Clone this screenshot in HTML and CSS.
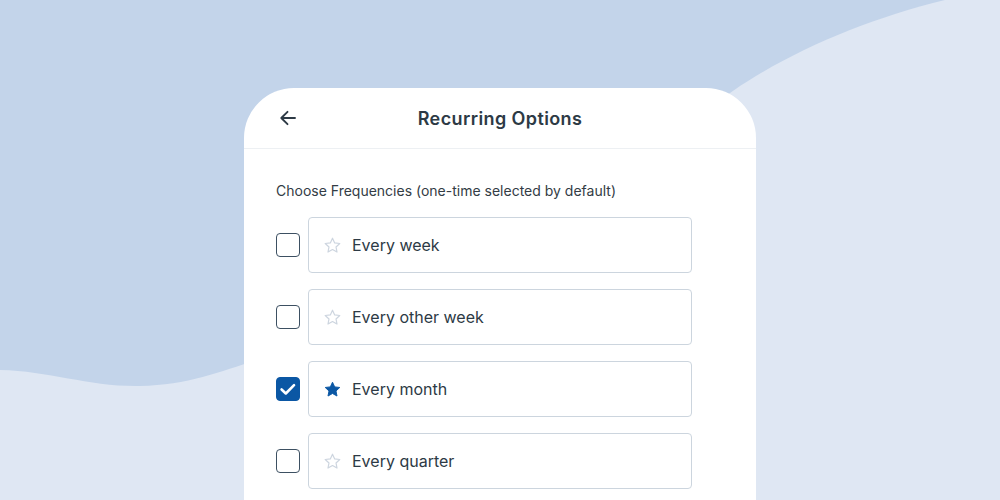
FILE: index.html
```html
<!DOCTYPE html>
<html>
<head>
<meta charset="utf-8">
<link rel="stylesheet" href="styles.css">
</head>
<body>
<svg class="bg" width="1000" height="500" viewBox="0 0 1000 500">
  <rect width="1000" height="500" fill="#c3d4ea"/>
  <path d="M945,0 C855,22 765,62 705,112 L600,500 L1000,500 L1000,0 Z" fill="#dfe7f3"/>
  <path d="M0,370 C50,371 90,387 140,386 C190,385 225,370 262,358 L262,500 L0,500 Z" fill="#dfe7f3"/>
</svg>
<div class="stage">
  <div class="card">
    <div class="header">
      <svg class="back" width="20" height="20" viewBox="0 0 20 20"><path d="M17 10H3.5M9.5 3.8L3.3 10L9.5 16.2" fill="none" stroke="#2d3a45" stroke-width="1.9" stroke-linecap="round" stroke-linejoin="round"/></svg>
      <h1 class="title">Recurring Options</h1>
    </div>
    <div class="content">
      <p class="label">Choose Frequencies (one-time selected by default)</p>
      <div class="row">
        <span class="check"></span>
        <div class="option">
          <svg class="star" width="19" height="19" viewBox="0 0 24 24"><path d="M12 2.8l2.75 5.9 6.45.75-4.77 4.42 1.27 6.38L12 17.05l-5.7 3.2 1.27-6.38L2.8 9.45l6.45-.75z" fill="none" stroke="#cdd5df" stroke-width="1.5" stroke-linejoin="round"/></svg>
          <span class="text">Every week</span>
        </div>
      </div>
      <div class="row">
        <span class="check"></span>
        <div class="option">
          <svg class="star" width="19" height="19" viewBox="0 0 24 24"><path d="M12 2.8l2.75 5.9 6.45.75-4.77 4.42 1.27 6.38L12 17.05l-5.7 3.2 1.27-6.38L2.8 9.45l6.45-.75z" fill="none" stroke="#cdd5df" stroke-width="1.5" stroke-linejoin="round"/></svg>
          <span class="text">Every other week</span>
        </div>
      </div>
      <div class="row">
        <span class="check checked"><svg viewBox="0 0 24 24"><path d="M5 12.5l4.6 4.4 9-9.2" fill="none" stroke="#fff" stroke-width="2.8" stroke-linecap="round" stroke-linejoin="round"/></svg></span>
        <div class="option">
          <svg class="star" width="19" height="19" viewBox="0 0 24 24"><path d="M12 2.8l2.75 5.9 6.45.75-4.77 4.42 1.27 6.38L12 17.05l-5.7 3.2 1.27-6.38L2.8 9.45l6.45-.75z" fill="#0b57a4" stroke="#0b57a4" stroke-width="1.2" stroke-linejoin="round"/></svg>
          <span class="text">Every month</span>
        </div>
      </div>
      <div class="row">
        <span class="check"></span>
        <div class="option">
          <svg class="star" width="19" height="19" viewBox="0 0 24 24"><path d="M12 2.8l2.75 5.9 6.45.75-4.77 4.42 1.27 6.38L12 17.05l-5.7 3.2 1.27-6.38L2.8 9.45l6.45-.75z" fill="none" stroke="#cdd5df" stroke-width="1.5" stroke-linejoin="round"/></svg>
          <span class="text">Every quarter</span>
        </div>
      </div>
    </div>
  </div>
</div>
</body>
</html>
```
FILE: styles.css
```css
html, body {
  margin: 0;
  padding: 0;
  width: 1000px;
  height: 500px;
  overflow: hidden;
  font-family: Inter, "Noto Sans", sans-serif;
  color: #2d3a45;
}
.bg {
  position: absolute;
  left: 0;
  top: 0;
  z-index: 0;
}
.stage {
  position: relative;
  z-index: 1;
  display: flex;
  justify-content: center;
  padding-top: 88px;
}
.card {
  width: 512px;
  height: 412px;
  overflow: hidden;
  background: #fff;
  border-radius: 50px 50px 0 0;
}
.header {
  height: 60px;
  border-bottom: 1px solid #edf0f3;
  display: flex;
  align-items: center;
  justify-content: center;
  position: relative;
}
.back {
  position: absolute;
  left: 34px;
  top: 20px;
}
.title {
  margin: 0;
  font-size: 18px;
  font-weight: 600;
  color: #2d3a45;
  letter-spacing: 0.4px;
}
.content {
  padding: 33px 64px 0 32px;
}
.label {
  margin: 0 0 17px;
  font-size: 14px;
  line-height: 18px;
  color: #333c45;
}
.row {
  display: flex;
  align-items: center;
  gap: 8px;
  margin-bottom: 16px;
}
.check {
  width: 24px;
  height: 24px;
  box-sizing: border-box;
  border: 1.5px solid #3d5062;
  border-radius: 4px;
  flex: none;
}
.check.checked {
  background: #0b57a4;
  border-color: #0b57a4;
  display: flex;
  align-items: center;
  justify-content: center;
}
.check.checked svg {
  width: 22px;
  height: 22px;
}
.option {
  flex: 1;
  height: 56px;
  box-sizing: border-box;
  border: 1px solid #ccd5de;
  border-radius: 4px;
  display: flex;
  align-items: center;
  padding-left: 14px;
  gap: 10px;
}
.star {
  flex: none;
}
.text {
  font-size: 16px;
  color: #2d3a45;
}
```
